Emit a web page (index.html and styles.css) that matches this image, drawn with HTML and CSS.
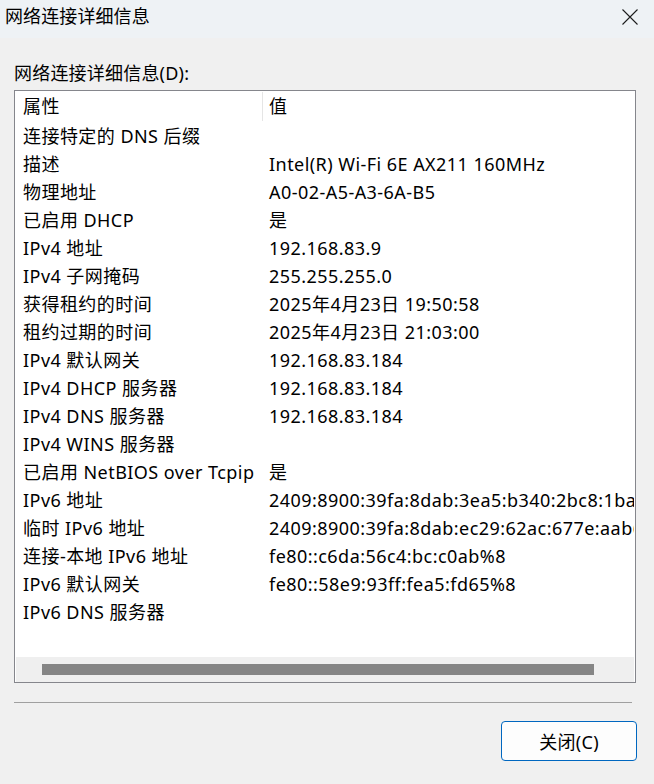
FILE: index.html
```html
<!DOCTYPE html>
<html lang="zh-CN">
<head>
<meta charset="utf-8">
<title>网络连接详细信息</title>
<link rel="stylesheet" href="styles.css">
</head>
<body>
<div class="window">
  <div class="titlebar">
    <span class="title">网络连接详细信息</span>
    <span class="close-x" aria-label="关闭">
      <svg width="16" height="16" viewBox="0 0 16 16"><path d="M0.5 0.5 L15.5 15.5 M15.5 0.5 L0.5 15.5" stroke="#1c1c1c" stroke-width="1.1" fill="none"/></svg>
    </span>
  </div>
  <div class="content">
    <div class="label">网络连接详细信息(D):</div>
    <div class="list">
      <div class="list-body">
        <div class="row header"><div class="c1">属性</div><div class="c2 hsep">值</div></div>
        <div class="row"><div class="c1">连接特定的 DNS 后缀</div><div class="c2"></div></div>
        <div class="row"><div class="c1">描述</div><div class="c2">Intel(R) Wi-Fi 6E AX211 160MHz</div></div>
        <div class="row"><div class="c1">物理地址</div><div class="c2">A0-02-A5-A3-6A-B5</div></div>
        <div class="row"><div class="c1">已启用 DHCP</div><div class="c2">是</div></div>
        <div class="row"><div class="c1">IPv4 地址</div><div class="c2">192.168.83.9</div></div>
        <div class="row"><div class="c1">IPv4 子网掩码</div><div class="c2">255.255.255.0</div></div>
        <div class="row"><div class="c1">获得租约的时间</div><div class="c2">2025年4月23日 19:50:58</div></div>
        <div class="row"><div class="c1">租约过期的时间</div><div class="c2">2025年4月23日 21:03:00</div></div>
        <div class="row"><div class="c1">IPv4 默认网关</div><div class="c2">192.168.83.184</div></div>
        <div class="row"><div class="c1">IPv4 DHCP 服务器</div><div class="c2">192.168.83.184</div></div>
        <div class="row"><div class="c1">IPv4 DNS 服务器</div><div class="c2">192.168.83.184</div></div>
        <div class="row"><div class="c1">IPv4 WINS 服务器</div><div class="c2"></div></div>
        <div class="row"><div class="c1">已启用 NetBIOS over Tcpip</div><div class="c2">是</div></div>
        <div class="row"><div class="c1">IPv6 地址</div><div class="c2">2409:8900:39fa:8dab:3ea5:b340:2bc8:1ba9</div></div>
        <div class="row"><div class="c1">临时 IPv6 地址</div><div class="c2">2409:8900:39fa:8dab:ec29:62ac:677e:aab6</div></div>
        <div class="row"><div class="c1">连接-本地 IPv6 地址</div><div class="c2">fe80::c6da:56c4:bc:c0ab%8</div></div>
        <div class="row"><div class="c1">IPv6 默认网关</div><div class="c2">fe80::58e9:93ff:fea5:fd65%8</div></div>
        <div class="row"><div class="c1">IPv6 DNS 服务器</div><div class="c2"></div></div>
      </div>
      <div class="hscroll"><div class="thumb"></div></div>
    </div>
    <div class="separator"></div>
    <div class="actions">
      <button class="btn">关闭(C)</button>
    </div>
  </div>
</div>
</body>
</html>
```

FILE: styles.css
```css
html, body {
  margin: 0;
  padding: 0;
}
body {
  width: 654px;
  height: 784px;
  background: #f0f0f0;
  font-family: "Noto Sans", "Noto Sans CJK SC", sans-serif;
  font-size: 18px;
  letter-spacing: 0.45px;
  color: #000;
  overflow: hidden;
}
.window {
  display: flex;
  flex-direction: column;
}
.titlebar {
  height: 38px;
  box-sizing: border-box;
  background: #eef2f5;
  display: flex;
  align-items: flex-start;
  justify-content: space-between;
  padding: 5px 16px 0 5px;
}
.title {
  font-size: 18px;
  line-height: 22px;
  letter-spacing: 0.1px;
}
.close-x {
  display: flex;
  margin-top: 4px;
}
.content {
  padding: 0 17px 0 14px;
  display: flex;
  flex-direction: column;
}
.label {
  padding-top: 23px;
  line-height: 24px;
  height: 24px;
  margin-bottom: 5px;
  letter-spacing: 0.2px;
}
.list {
  width: 622px;
  height: 593px;
  box-sizing: border-box;
  border: 1px solid #85868c;
  background: #fff;
  padding: 0 1px;
  display: flex;
  flex-direction: column;
}
.list-body {
  flex: 1;
  overflow: hidden;
}
.row {
  display: grid;
  grid-template-columns: 246px 1fr;
  height: 28px;
  line-height: 28px;
  white-space: nowrap;
}
.row.header {
  height: 31px;
  line-height: 31px;
}
.c1,
.c2 {
  padding-left: 7px;
  overflow: hidden;
}
.c2.hsep {
  padding-left: 6px;
  border-left: 1px solid #e5e5e5;
  margin: 1px 0;
  line-height: 29px;
}
.hscroll {
  height: 25px;
  background: #efefef;
  display: flex;
  align-items: center;
  padding-left: 26px;
}
.thumb {
  width: 552px;
  height: 11px;
  background: #858585;
}
.separator {
  margin-top: 19px;
  width: 618px;
  height: 1px;
  background: #a0a0a0;
}
.actions {
  display: flex;
  justify-content: flex-end;
  padding-top: 18px;
}
.btn {
  width: 136px;
  height: 40px;
  box-sizing: border-box;
  border: 1px solid #0067c0;
  border-radius: 4px;
  background: #fdfdfd;
  font-family: "Noto Sans", "Noto Sans CJK SC", sans-serif;
  font-size: 18px;
  letter-spacing: 0.3px;
  color: #000;
  padding: 0;
}
```
